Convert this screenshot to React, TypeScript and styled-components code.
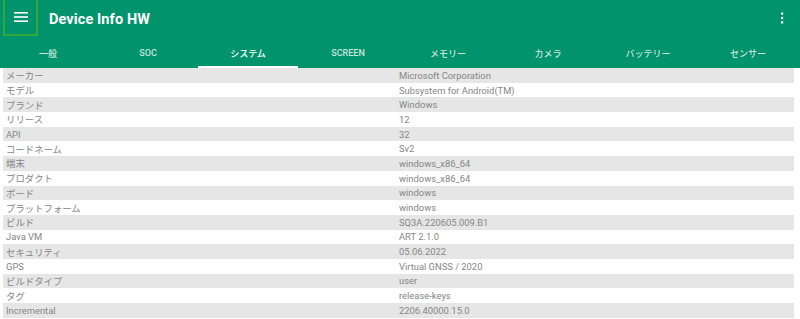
import React from "react";
import styled, { createGlobalStyle } from "styled-components";

const Global = createGlobalStyle`
  html, body { margin: 0; padding: 0; background: #fff; }
  body { font-family: Roboto, "Noto Sans CJK JP", "Noto Sans", sans-serif; width: 800px; height: 319px; overflow: hidden; }
`;

const AppBar = styled.header`
  background: #01936b;
  color: #fff;
  height: 68px;
  display: flex;
  flex-direction: column;
`;

const Toolbar = styled.div`
  height: 38px;
  display: flex;
  align-items: center;
`;

const MenuButton = styled.div`
  width: 31px;
  height: 34px;
  margin-left: 3px;
  align-self: flex-start;
  border: 2px solid #33a83b;
  border-top: none;
  display: flex;
  align-items: center;
  justify-content: center;
  box-sizing: content-box;
`;

const Title = styled.div`
  margin-left: 11px;
  font-size: 14.5px;
  font-weight: 700;
  letter-spacing: 0.1px;
  flex: 1;
`;

const Kebab = styled.div`
  width: 20px;
  display: flex;
  justify-content: center;
  margin-right: 8px;
  margin-top: -2px;
`;

const Tabs = styled.nav`
  height: 30px;
  display: grid;
  grid-template-columns: repeat(8, 100px);
  margin-left: -2px;
`;

const Tab = styled.div<{ $active?: boolean }>`
  display: flex;
  align-items: center;
  justify-content: center;
  font-size: 9px;
  font-weight: 500;
  color: ${(p) => (p.$active ? "#ffffff" : "rgba(255,255,255,0.78)")};
  border-bottom: 2px solid ${(p) => (p.$active ? "#ffffff" : "transparent")};
  box-sizing: border-box;
  padding-top: 2px;
`;

const List = styled.div`
  padding: 0 6px 0 3px;
  display: flex;
  flex-direction: column;
`;

const Row = styled.div<{ $shade: boolean }>`
  height: 14.7px;
  display: grid;
  grid-template-columns: 396px 1fr;
  align-items: center;
  background: ${(p) => (p.$shade ? "#e6e6e6" : "#ffffff")};
  font-size: 9.4px;
  color: #858585;
`;

const Label = styled.div`
  padding-left: 3px;
  white-space: nowrap;
`;

const Value = styled.div`
  white-space: nowrap;
`;

const tabs = ["一般", "SOC", "システム", "SCREEN", "メモリー", "カメラ", "バッテリー", "センサー"];

const rows: [string, string][] = [
  ["メーカー", "Microsoft Corporation"],
  ["モデル", "Subsystem for Android(TM)"],
  ["ブランド", "Windows"],
  ["リリース", "12"],
  ["API", "32"],
  ["コードネーム", "Sv2"],
  ["端末", "windows_x86_64"],
  ["プロダクト", "windows_x86_64"],
  ["ボード", "windows"],
  ["プラットフォーム", "windows"],
  ["ビルド", "SQ3A.220605.009.B1"],
  ["Java VM", "ART 2.1.0"],
  ["セキュリティ", "05.06.2022"],
  ["GPS", "Virtual GNSS / 2020"],
  ["ビルドタイプ", "user"],
  ["タグ", "release-keys"],
  ["Incremental", "2206.40000.15.0"],
];

export default function App() {
  return (
    <>
      <Global />
      <AppBar>
        <Toolbar>
          <MenuButton>
            <svg width="14" height="12" viewBox="0 0 14 12">
              <rect x="0" y="1" width="14" height="1.6" fill="#fff" />
              <rect x="0" y="5.2" width="14" height="1.6" fill="#fff" />
              <rect x="0" y="9.4" width="14" height="1.6" fill="#fff" />
            </svg>
          </MenuButton>
          <Title>Device Info HW</Title>
          <Kebab>
            <svg width="4" height="12" viewBox="0 0 4 12">
              <rect x="1" y="0.5" width="2.2" height="2.2" fill="#fff" />
              <rect x="1" y="4.9" width="2.2" height="2.2" fill="#fff" />
              <rect x="1" y="9.3" width="2.2" height="2.2" fill="#fff" />
            </svg>
          </Kebab>
        </Toolbar>
        <Tabs>
          {tabs.map((t, i) => (
            <Tab key={t} $active={i === 2}>
              {t}
            </Tab>
          ))}
        </Tabs>
      </AppBar>
      <List>
        {rows.map(([k, v], i) => (
          <Row key={k} $shade={i % 2 === 0}>
            <Label>{k}</Label>
            <Value>{v}</Value>
          </Row>
        ))}
      </List>
    </>
  );
}
